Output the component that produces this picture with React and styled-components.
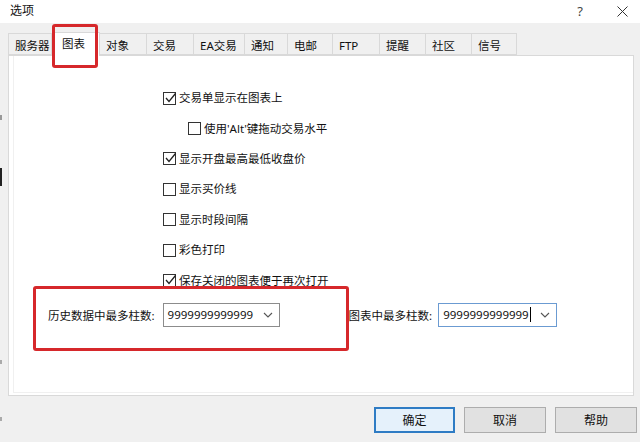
import React from "react";
import styled, { createGlobalStyle } from "styled-components";

const Global = createGlobalStyle`
  html, body { margin: 0; padding: 0; background: #f0f0f0; }
  body { width: 640px; height: 442px; overflow: hidden;
    font-family: "Noto Sans", "Noto Sans CJK SC", sans-serif; font-size: 11.5px; color: #111; }
`;

const Window = styled.div`
  position: relative;
  width: 640px;
  height: 442px;
  display: flex;
  flex-direction: column;
  background: #f0f0f0;
`;

const TitleBar = styled.div`
  height: 23px;
  background: #fff;
  display: flex;
  align-items: center;
  justify-content: space-between;
  padding: 0 12px 1px 10px;
  box-sizing: border-box;
  font-size: 12px;
  line-height: 14px;
`;

const TitleButtons = styled.div`
  display: flex;
  align-items: center;
  gap: 34px;
  color: #333;
`;

const Help = styled.span`
  font-size: 13px;
  color: #444;
`;

const TabStrip = styled.div`
  display: flex;
  align-items: flex-end;
  margin: 10px 0 0 8px;
  height: 22px;
`;

const Tab = styled.div`
  box-sizing: border-box;
  width: ${(p) => p.$w}px;
  height: ${(p) => (p.$active ? 24 : 22)}px;
  padding-left: ${(p) => (p.$active ? 9 : 6)}px;
  padding-top: ${(p) => (p.$active ? 4 : 5)}px;
  line-height: 14px;
  white-space: nowrap;
  background: ${(p) => (p.$active ? "#fff" : "#f0f0f0")};
  border: 1px solid #d9d9d9;
  border-left: ${(p) => (p.$first || p.$active ? "1px solid #d9d9d9" : "none")};
  border-bottom: ${(p) => (p.$active ? "none" : "1px solid #d9d9d9")};
  margin-bottom: ${(p) => (p.$active ? -1 : 0)}px;
  position: relative;
  z-index: ${(p) => (p.$active ? 2 : 1)};
`;

const Panel = styled.div`
  position: relative;
  margin-left: 8px;
  width: 626px;
  height: 341px;
  box-sizing: border-box;
  background: #fff;
  border: 1px solid #d9d9d9;
  padding: 0 0 2px 4px;
  display: flex;
`;

const Page = styled.div`
  flex: 1;
  border-left: 1px solid #f0f0f0;
  border-bottom: 1px solid #f0f0f0;
  display: flex;
  flex-direction: column;
  padding-top: 27px;
`;

const CheckRow = styled.div`
  height: 30.4px;
  display: flex;
  align-items: center;
  gap: 3px;
  padding-left: ${(p) => (p.$indent ? 174 : 149)}px;
  line-height: 14px;
  white-space: nowrap;
`;

const Box = styled.span`
  width: 13px;
  height: 13px;
  box-sizing: border-box;
  border: 1px solid #333;
  background: #fff;
  position: relative;
  flex: none;
`;

const Tick = styled.svg`
  position: absolute;
  left: 0;
  top: -2px;
  width: 13px;
  height: 13px;
  overflow: visible;
`;

const ComboRow = styled.div`
  display: flex;
  align-items: center;
  margin-top: 7px;
  padding-left: 34px;
  height: 24px;
  white-space: nowrap;
`;

const Field = styled.div`
  display: flex;
  align-items: center;
  gap: ${(p) => p.$gap}px;
  margin-left: ${(p) => p.$ml || 0}px;
`;

const Combo = styled.div`
  width: ${(p) => p.$w}px;
  height: 24px;
  box-sizing: border-box;
  border: 1px solid ${(p) => (p.$focus ? "#6b9bd2" : "#8c8c8c")};
  background: #fff;
  display: flex;
  align-items: center;
  padding: 0 6px 0 4px;
  font-size: 11.5px;
  line-height: 14px;
`;

const ComboText = styled.span`
  flex: 1;
  display: flex;
  align-items: center;
`;

const Caret = styled.span`
  width: 1px;
  height: 15px;
  background: #000;
  margin-left: 1px;
`;

const Footer = styled.div`
  display: flex;
  justify-content: flex-end;
  gap: 9px;
  padding: 11px 3px 0 0;
`;

const Button = styled.div`
  width: ${(p) => p.$w}px;
  height: 26px;
  box-sizing: border-box;
  display: flex;
  align-items: center;
  justify-content: center;
  background: ${(p) => (p.$default ? "#e5f1fb" : "#e1e1e1")};
  border: ${(p) => (p.$default ? "2px solid #2f7cc4" : "1px solid #adadad")};
  font-size: 12px;
`;

const Marker = styled.div`
  position: absolute;
  left: ${(p) => p.$x}px;
  top: ${(p) => p.$y}px;
  width: ${(p) => p.$w}px;
  height: ${(p) => p.$h}px;
  box-sizing: border-box;
  border: 3px solid #d6282b;
  border-radius: 3px;
  pointer-events: none;
  z-index: 5;
`;

const EdgeMark = styled.div`
  position: absolute;
  left: 0;
  top: ${(p) => p.$y}px;
  width: 2px;
  height: ${(p) => p.$h}px;
  background: ${(p) => p.$c};
`;

const tabs = [
  ["服务器", 44],
  ["图表", 48],
  ["对象", 47],
  ["交易", 47],
  ["EA交易", 51],
  ["通知", 43],
  ["电邮", 45],
  ["FTP", 47],
  ["提醒", 46],
  ["社区", 46],
  ["信号", 45],
];

const checks = [
  ["交易单显示在图表上", true, false],
  ["使用'Alt'键拖动交易水平", false, true],
  ["显示开盘最高最低收盘价", true, false],
  ["显示买价线", false, false],
  ["显示时段间隔", false, false],
  ["彩色打印", false, false],
  ["保存关闭的图表便于再次打开", true, false],
];

const Chevron = () => (
  <svg width="10" height="6" viewBox="0 0 10 6">
    <path d="M1 1 L5 5 L9 1" fill="none" stroke="#555" strokeWidth="1.1" />
  </svg>
);

export default function App() {
  return (
    <>
      <Global />
      <Window>
        <TitleBar>
          <span>选项</span>
          <TitleButtons>
            <Help>?</Help>
            <svg width="11" height="11" viewBox="0 0 11 11">
              <path d="M0.5 0.5 L10.5 10.5 M10.5 0.5 L0.5 10.5" stroke="#333" strokeWidth="1" />
            </svg>
          </TitleButtons>
        </TitleBar>
        <TabStrip>
          {tabs.map(([t, w], i) => (
            <Tab key={t} $w={w} $first={i === 0} $active={i === 1}>
              {t}
            </Tab>
          ))}
        </TabStrip>
        <Panel>
          <Page>
            {checks.map(([t, c, indent]) => (
              <CheckRow key={t} $indent={indent}>
                <Box>
                  {c && (
                    <Tick viewBox="0 0 13 13">
                      <path d="M2 7 L5 10.5 L11.5 2.5" fill="none" stroke="#222" strokeWidth="1.3" />
                    </Tick>
                  )}
                </Box>
                <span>{t}</span>
              </CheckRow>
            ))}
            <ComboRow>
              <Field $gap={8}>
                <span>历史数据中最多柱数:</span>
                <Combo $w={117}>
                  <ComboText>9999999999999</ComboText>
                  <Chevron />
                </Combo>
              </Field>
              <Field $gap={6} $ml={69}>
                <span>图表中最多柱数:</span>
                <Combo $w={119} $focus>
                  <ComboText>
                    9999999999999
                    <Caret />
                  </ComboText>
                  <Chevron />
                </Combo>
              </Field>
            </ComboRow>
          </Page>
          <Marker $x={24} $y={230} $w={316} $h={65} />
        </Panel>
        <Footer>
          <Button $w={81} $default>确定</Button>
          <Button $w={82}>取消</Button>
          <Button $w={82}>帮助</Button>
        </Footer>
        <Marker $x={52} $y={24} $w={46} $h={44} />
        <EdgeMark $y={115} $h={5} $c="#999" />
        <EdgeMark $y={168} $h={18} $c="#222" />
        <EdgeMark $y={360} $h={4} $c="#aaa" />
        <EdgeMark $y={417} $h={4} $c="#aaa" />
      </Window>
    </>
  );
}
